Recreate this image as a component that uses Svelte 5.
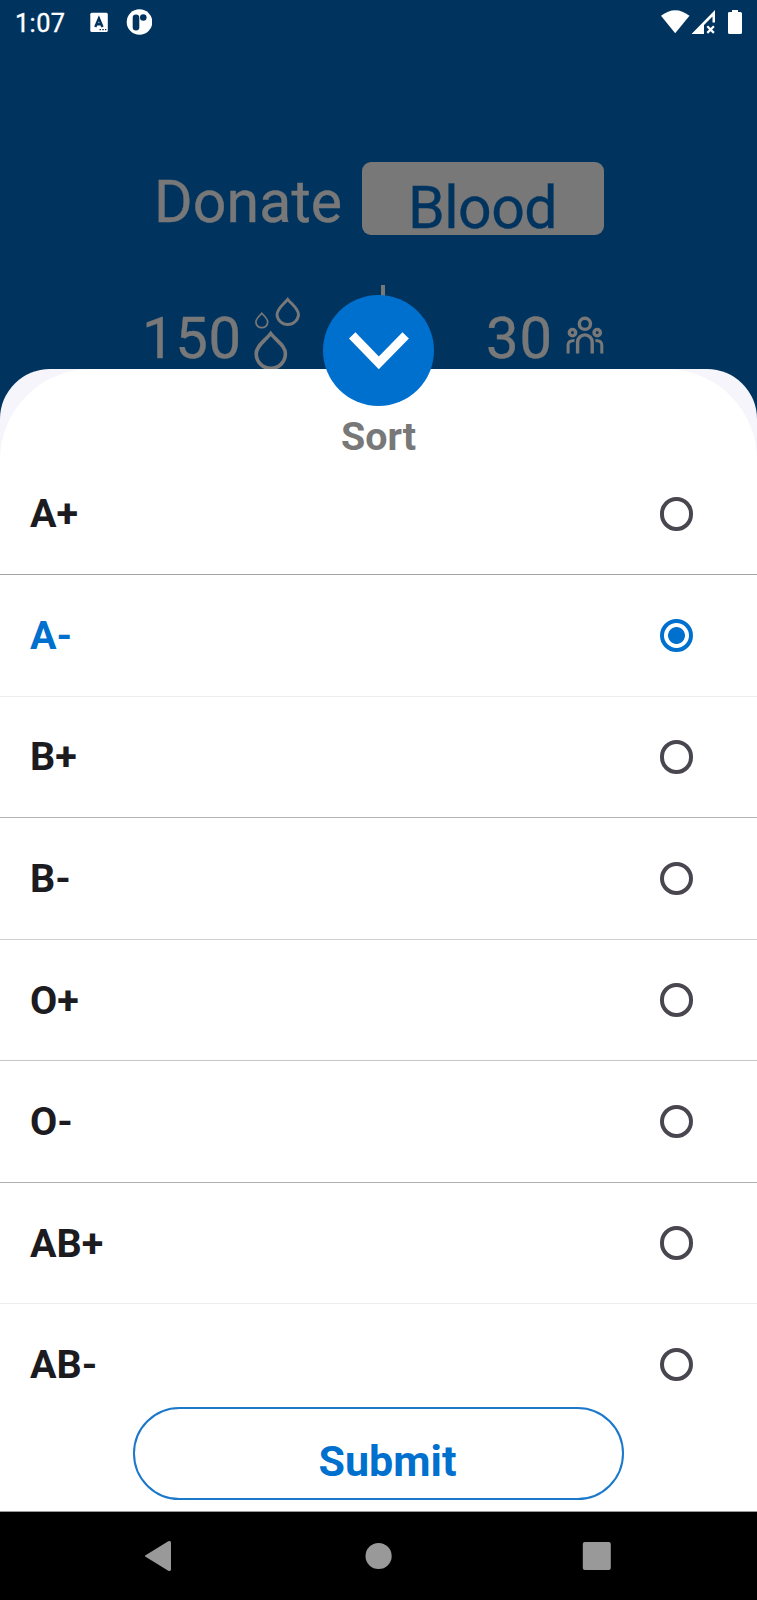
<script>
  const types = [
    { name: 'A+', line: '#a3a3a5' },
    { name: 'A-', line: '#ededed' },
    { name: 'B+', line: '#b3b3b4' },
    { name: 'B-', line: '#cfcfd0' },
    { name: 'O+', line: '#c6c6c7' },
    { name: 'O-', line: '#b0b0b1' },
    { name: 'AB+', line: '#ededed' },
    { name: 'AB-', line: 'transparent' }
  ];
  let selected = $state('A-');
</script>

<div class="screen">
  <header class="status">
    <span class="time">1:07</span>
    <svg class="left" width="64" height="28" viewBox="88 8 64 28">
      <rect x="90.3" y="12.7" width="17.5" height="19.3" rx="1.5" fill="#fff" />
      <path d="M95.3 27 98.9 18.3 102.5 27M96.7 24.2h4.6" fill="none" stroke="#00345f" stroke-width="2.4" />
      <path d="M99.5 29.6h1.5M102.3 29.6h1.5M105 29.6h1.3" stroke="#00345f" stroke-width="1.4" />
      <circle cx="139.5" cy="22" r="12.8" fill="#fff" />
      <rect x="132.7" y="14.5" width="6.6" height="16" rx="3.3" fill="#00345f" />
      <circle cx="143.3" cy="17.5" r="3.3" fill="#00345f" />
    </svg>
    <svg class="right" width="84" height="28" viewBox="660 8 84 28">
      <path d="M661 15.8Q675.2 4.6 689.5 15.8L675.2 33.3Z" fill="#fff" />
      <path d="M691.5 34 715 10V22.5H712.5V16.5L704 25V34Z" fill="#fff" />
      <path d="m707.3 26.3 6.6 6.6m0-6.6-6.6 6.6" stroke="#fff" stroke-width="2.2" />
      <path d="M729 12h3v-2h6v2h2.5q1.5 0 1.5 1.5v19q0 1.5-1.5 1.5h-11q-1.5 0-1.5-1.5v-19Q728 12 729 12Z" fill="#fff" />
    </svg>
  </header>

  <section class="hero">
    <div class="title">
      <span class="donate">Donate</span>
      <span class="pill"><span>Blood</span></span>
    </div>
    <div class="stats">
      <div class="stat units">
        <span class="num">150</span>
        <svg width="50" height="84" viewBox="252 285 50 84" fill="none" stroke="#787878">
          <path d="M261.8 313.2C259 316.5 255.9 318.6 255.9 322A5.9 5.7 0 0 0 267.7 322C267.7 318.6 264.6 316.5 261.8 313.2Z" stroke-width="1.7" />
          <path d="M287.7 299.3C283 305 277 308.6 277 314.8A10.8 10.8 0 0 0 298.5 314.8C298.5 308.6 292.4 305 287.7 299.3Z" stroke-width="2.9" />
          <path d="M270.7 333.5C265 341 256.2 345.5 256.2 353.8A14.6 14.6 0 0 0 285.4 353.8C285.4 345.5 276.5 341 270.7 333.5Z" stroke-width="3.6" />
        </svg>
      </div>
      <div class="divider"></div>
      <div class="stat donors">
        <span class="num">30</span>
        <svg width="40" height="84" viewBox="565 285 40 84" fill="none" stroke="#787878" stroke-width="3.4">
          <circle cx="584.9" cy="323.8" r="5.6" />
          <circle cx="572.5" cy="332.6" r="3.2" />
          <circle cx="597.2" cy="332.6" r="3.2" />
          <path d="M577.6 353.5V342.2a7.3 7.3 0 0 1 14.6 0v11.3" />
          <path d="M568.1 353.5V345q0-4.6 6.4-4.6M601.8 353.5V345q0-4.6-6.4-4.6" stroke-width="3" />
        </svg>
      </div>
    </div>
  </section>

  <main class="sheet">
    <button class="close" aria-label="Close">
      <svg width="111" height="111" viewBox="323 295 111 111">
        <path d="m352.2 335.3 26.6 27.5 26.9-27.5" fill="none" stroke="#fff" stroke-width="9" />
      </svg>
    </button>
    <div class="inner">
      <h1>Sort</h1>
      <div class="list">
        {#each types as t}
          <button class="row" class:on={selected === t.name} style:border-color={t.line} onclick={() => (selected = t.name)}>
            <span class="label">{t.name}</span>
            <span class="radio"></span>
          </button>
        {/each}
      </div>
      <button class="submit">Submit</button>
    </div>
  </main>

  <nav>
    <svg width="757" height="88" viewBox="0 1512 757 88" fill="#999">
      <path d="M145.5 1555.2 168.3 1541.3Q171 1540.2 171 1542.8V1569.2Q171 1571.8 168.3 1570.7L145.5 1556.8Q144.3 1556 145.5 1555.2Z" />
      <circle cx="378.6" cy="1556" r="13.1" />
      <rect x="582.8" y="1542" width="28" height="28" rx="2" />
    </svg>
  </nav>
</div>

<style>
  :global(body) {
    margin: 0;
  }
  button {
    font: inherit;
    border: 0;
    padding: 0;
    background: none;
    cursor: pointer;
  }
  svg {
    display: block;
  }
  .screen {
    width: 757px;
    height: 1600px;
    display: flex;
    flex-direction: column;
    overflow: hidden;
    background: #00345f;
    font-family: Roboto, 'Open Sans', sans-serif;
  }
  .status {
    height: 44px;
    box-sizing: border-box;
    padding: 0 13px 0 15px;
    display: flex;
    align-items: center;
    color: #fff;
  }
  .time {
    width: 73px;
    font-size: 25.3px;
    line-height: 47px;
    letter-spacing: 0.4px;
    padding-top: 2px;
    -webkit-text-stroke: 0.35px;
  }
  .right {
    margin-left: auto;
  }
  .hero {
    height: 325px;
    box-sizing: border-box;
    padding-top: 118px;
    color: #787878;
    -webkit-text-stroke: 0.4px;
  }
  .title {
    display: flex;
    height: 73px;
    padding-left: 154px;
    font-size: 59px;
  }
  .donate {
    width: 207.5px;
    line-height: 79px;
    letter-spacing: 0.1px;
  }
  .pill {
    width: 242px;
    height: 73px;
    border-radius: 9px;
    background: #787878;
    color: #00345f;
    text-align: center;
    line-height: 91px;
    letter-spacing: -0.5px;
  }
  .stats {
    margin-top: 50px;
    display: grid;
    grid-template-columns: 381px 4px 1fr;
    height: 84px;
  }
  .divider {
    background: #787878;
  }
  .stat {
    display: flex;
    font-size: 58px;
    line-height: 106px;
  }
  .units {
    padding-left: 142px;
  }
  .units .num {
    width: 110px;
    letter-spacing: 0.6px;
  }
  .donors {
    padding-left: 101px;
  }
  .donors .num {
    width: 79px;
    letter-spacing: 0.8px;
  }
  .sheet {
    position: relative;
    height: 1142px;
    border-radius: 50px 50px 0 0;
    background: #f6f5fb;
    flex: none;
  }
  .inner {
    height: 1142px;
    background: #fff;
    border-radius: 91px 91px 0 0;
    display: flex;
    flex-direction: column;
    align-items: center;
  }
  .close {
    position: absolute;
    left: 323px;
    top: -74px;
    width: 111px;
    height: 111px;
    border-radius: 50%;
    background: #0070ce;
  }
  h1 {
    margin: 0;
    padding-top: 41.6px;
    height: 43px;
    line-height: 51px;
    font-size: 39.4px;
    font-weight: 700;
    color: #787878;
  }
  .list {
    width: 757px;
    height: 953px;
    flex: none;
    overflow: hidden;
  }
  .row {
    width: 757px;
    height: 121.55px;
    box-sizing: border-box;
    padding: 0 64px 0 30px;
    border-bottom: 1px solid;
    display: flex;
    align-items: center;
    justify-content: space-between;
    color: #1c1b1f;
    font-size: 39.5px;
    font-weight: 700;
  }
  .row.on {
    color: #0070ce;
  }
  .label {
    line-height: 60px;
    padding-top: 1px;
  }
  .radio {
    width: 33.4px;
    height: 33.4px;
    box-sizing: border-box;
    border: 4px solid #49464f;
    border-radius: 50%;
  }
  .on .radio {
    border-color: #0070ce;
    background: radial-gradient(circle, #0070ce 8px, transparent 8.8px);
  }
  .submit {
    width: 491px;
    height: 93px;
    box-sizing: border-box;
    border: 2px solid #1b78cb;
    border-radius: 47px;
    background: #fff;
    color: #0070ce;
    font-size: 43px;
    font-weight: 700;
    line-height: 104px;
    padding-left: 18px;
  }
  nav {
    height: 88px;
    border-top: 1px solid #999;
    background: #000;
    flex: none;
  }
</style>
